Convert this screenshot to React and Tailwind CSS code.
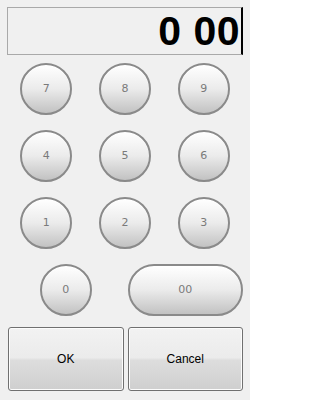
import { useState } from "react";

const rows = [["7", "8", "9"], ["4", "5", "6"], ["1", "2", "3"]];

const padKey =
  "h-[52px] rounded-full border-2 border-[#8a8a8a] bg-gradient-to-b from-[#ffffff] via-[#ebebeb] to-[#c2c2c2] text-[11px] text-[#7a7a7a] shadow-[inset_0_1px_0_#fff] cursor-pointer font-['DejaVu_Sans',sans-serif]";

const bigBtn =
  "h-[64px] rounded-[3px] border border-[#707070] bg-[linear-gradient(to_bottom,#f2f2f2_0%,#ebebeb_48%,#dddddd_52%,#cfcfcf_100%)] text-[12px] text-black shadow-[inset_0_0_0_1px_#fcfcfc] cursor-pointer";

export default function App() {
  const [value, setValue] = useState("0 00");

  return (
    <div className="w-[250px] h-[400px] bg-[#f0f0f0] font-['Liberation_Sans',Tahoma,sans-serif] px-[7px] pt-[7px] flex flex-col">
      {/* ── Display ── */}
      <div className="h-[48px] border border-[#a9a9a9] border-r-2 border-r-black bg-[#f0f0f0] flex items-center justify-end pr-[1px] overflow-hidden">
        <span className="text-[41px] font-bold leading-none tracking-[0.5px] text-black">{value}</span>
      </div>

      {/* ── Keypad ── */}
      <div className="mt-[8px] flex flex-col gap-[15px]">
        {rows.map((row, i) => (
          <div key={i} className="grid grid-cols-3">
            {row.map((k) => (
              <div key={k} className="flex justify-center">
                <button className={`${padKey} w-[52px]`}>{k}</button>
              </div>
            ))}
          </div>
        ))}
        <div className="grid grid-cols-2 gap-[4px] pl-[1px]">
          <div className="flex justify-center">
            <button className={`${padKey} w-[52px]`}>0</button>
          </div>
          <button className={`${padKey} w-full`}>00</button>
        </div>
      </div>

      {/* ── Actions ── */}
      <div className="mt-[11px] grid grid-cols-2 gap-[4px] pl-[1px]">
        <button className={bigBtn} onClick={() => setValue(value)}>OK</button>
        <button className={bigBtn}>Cancel</button>
      </div>
    </div>
  );
}
